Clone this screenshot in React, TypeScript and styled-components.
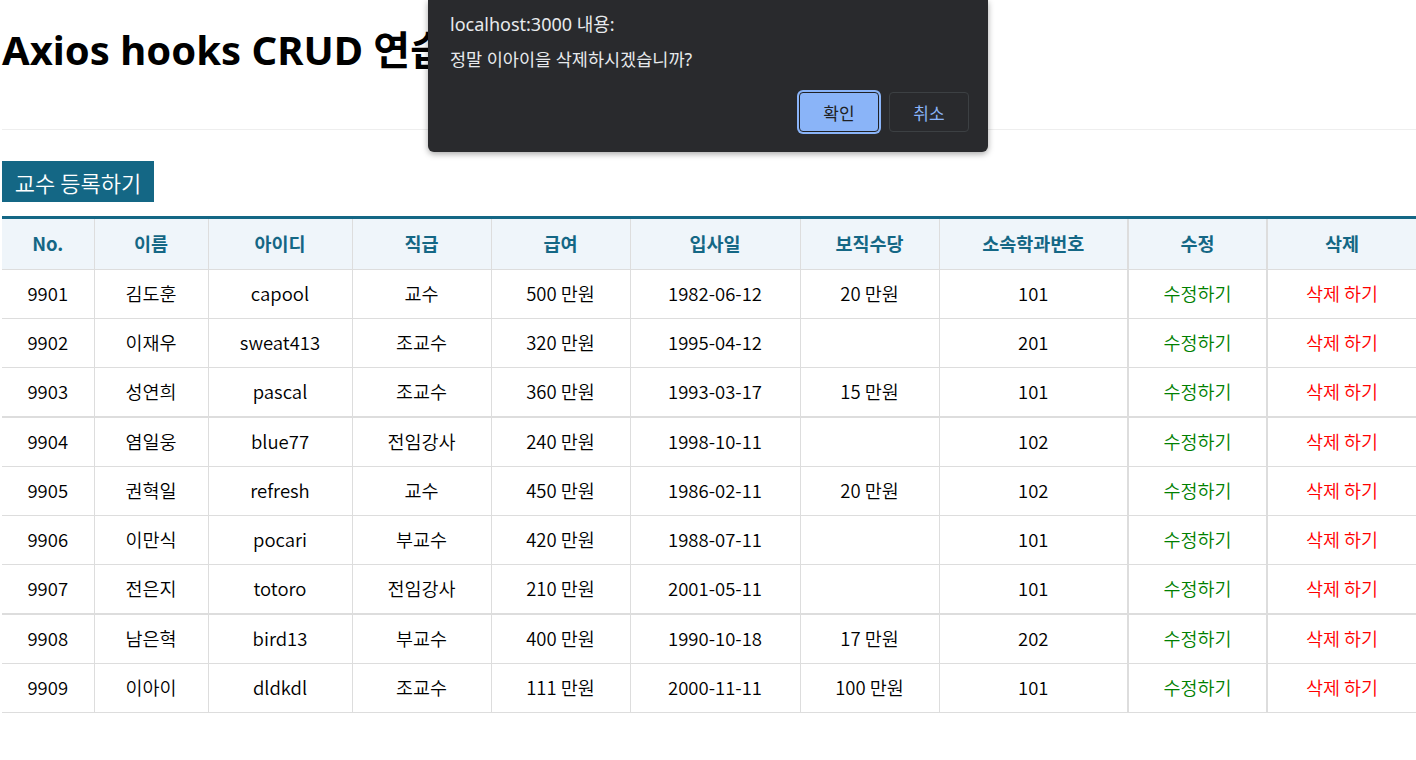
import React from "react";
import styled, { createGlobalStyle } from "styled-components";

interface Professor {
  no: number;
  name: string;
  userid: string;
  position: string;
  sal: number;
  hiredate: string;
  comm?: number;
  deptno: number;
}

const professors: Professor[] = [
  { no: 9901, name: "김도훈", userid: "capool", position: "교수", sal: 500, hiredate: "1982-06-12", comm: 20, deptno: 101 },
  { no: 9902, name: "이재우", userid: "sweat413", position: "조교수", sal: 320, hiredate: "1995-04-12", deptno: 201 },
  { no: 9903, name: "성연희", userid: "pascal", position: "조교수", sal: 360, hiredate: "1993-03-17", comm: 15, deptno: 101 },
  { no: 9904, name: "염일웅", userid: "blue77", position: "전임강사", sal: 240, hiredate: "1998-10-11", deptno: 102 },
  { no: 9905, name: "권혁일", userid: "refresh", position: "교수", sal: 450, hiredate: "1986-02-11", comm: 20, deptno: 102 },
  { no: 9906, name: "이만식", userid: "pocari", position: "부교수", sal: 420, hiredate: "1988-07-11", deptno: 101 },
  { no: 9907, name: "전은지", userid: "totoro", position: "전임강사", sal: 210, hiredate: "2001-05-11", deptno: 101 },
  { no: 9908, name: "남은혁", userid: "bird13", position: "부교수", sal: 400, hiredate: "1990-10-18", comm: 17, deptno: 202 },
  { no: 9909, name: "이아이", userid: "dldkdl", position: "조교수", sal: 111, hiredate: "2000-11-11", comm: 100, deptno: 101 },
];

const columns = [
  { label: "No.", width: 92 },
  { label: "이름", width: 114 },
  { label: "아이디", width: 144 },
  { label: "직급", width: 139 },
  { label: "급여", width: 139 },
  { label: "입사일", width: 170 },
  { label: "보직수당", width: 139 },
  { label: "소속학과번호", width: 189 },
  { label: "수정", width: 139 },
  { label: "삭제", width: 149 },
];

const App: React.FC = () => {
  return (
    <>
      <GlobalStyle />
      <Page>
        <Title>Axios hooks CRUD 연습</Title>
        <Divider />
        <AddButton>교수 등록하기</AddButton>
        <Table>
          <colgroup>
            {columns.map((c) => (
              <col key={c.label} style={{ width: c.width }} />
            ))}
          </colgroup>
          <thead>
            <tr>
              {columns.map((c) => (
                <Th key={c.label}>{c.label}</Th>
              ))}
            </tr>
          </thead>
          <tbody>
            {professors.map((p) => (
              <Row key={p.no}>
                <Td>{p.no}</Td>
                <Td>{p.name}</Td>
                <Td>{p.userid}</Td>
                <Td>{p.position}</Td>
                <Td>{p.sal} 만원</Td>
                <Td>{p.hiredate}</Td>
                <Td>{p.comm ? `${p.comm} 만원` : ""}</Td>
                <Td>{p.deptno}</Td>
                <Td>
                  <ActionLink $color="#008000">수정하기</ActionLink>
                </Td>
                <Td>
                  <ActionLink $color="#ff0000">삭제 하기</ActionLink>
                </Td>
              </Row>
            ))}
          </tbody>
        </Table>
      </Page>

      <Dialog>
        <DialogTitle>localhost:3000 내용:</DialogTitle>
        <DialogMessage>정말 이아이을 삭제하시겠습니까?</DialogMessage>
        <DialogButtons>
          <DialogButton $primary>확인</DialogButton>
          <DialogButton>취소</DialogButton>
        </DialogButtons>
      </Dialog>
    </>
  );
};

export default App;

const GlobalStyle = createGlobalStyle`
  body {
    margin: 0;
    background: #fff;
    font-family: "Noto Sans CJK KR", "Noto Sans", sans-serif;
    color: #000;
  }
`;

const Page = styled.div`
  padding: 0 0 0 2px;
`;

const Title = styled.h1`
  margin: 0;
  padding: 24px 0 0;
  height: 129px;
  box-sizing: border-box;
  font-family: "Noto Sans", "Noto Sans CJK KR", sans-serif;
  font-size: 40px;
  font-weight: 700;
  line-height: 52px;
`;

const Divider = styled.hr`
  margin: 0 0 31px;
  border: none;
  border-top: 1px solid #eeeeee;
  height: 0;
`;

const AddButton = styled.button`
  display: block;
  width: 152px;
  height: 41px;
  padding: 0;
  background: #146785;
  color: #fff;
  border: none;
  font-family: "Noto Sans CJK KR", sans-serif;
  font-size: 22px;
  font-weight: 350;
  cursor: pointer;
`;

const Table = styled.table`
  margin-top: 14px;
  width: 1414px;
  border-collapse: collapse;
  table-layout: fixed;
  border-top: 3px solid #146785;
  font-size: 18.5px;
  font-weight: 350;
`;

const Th = styled.th`
  height: 48px;
  padding: 0 0 2px;
  background: #eff5fa;
  color: #146785;
  font-weight: 700;
  font-size: 18.5px;
  border: 1px solid #dddddd;
  border-top: none;
  &:first-child {
    border-left: none;
  }
  &:last-child {
    border-right: none;
  }
  &:nth-child(9),
  &:nth-child(10) {
    border-left-width: 2px;
  }
`;

const Row = styled.tr`
  &:nth-child(3) td,
  &:nth-child(7) td {
    border-bottom-width: 2px;
  }
`;

const Td = styled.td`
  height: 46px;
  padding: 0 0 2px;
  text-align: center;
  border: 1px solid #dddddd;
  &:first-child {
    border-left: none;
  }
  &:last-child {
    border-right: none;
  }
  &:nth-child(9),
  &:nth-child(10) {
    border-left-width: 2px;
  }
`;

const ActionLink = styled.span<{ $color: string }>`
  color: ${(p) => p.$color};
  cursor: pointer;
`;

const Dialog = styled.div`
  position: absolute;
  top: 0;
  left: 428px;
  width: 560px;
  height: 152px;
  box-sizing: border-box;
  padding: 11px 19px 20px 22px;
  background: #292a2d;
  border-radius: 0 0 6px 6px;
  box-shadow: 0 2px 6px rgba(0, 0, 0, 0.35);
  font-family: "Noto Sans", "Noto Sans CJK KR", sans-serif;
  display: flex;
  flex-direction: column;
`;

const DialogTitle = styled.div`
  color: #e8eaed;
  font-size: 18px;
  line-height: 26px;
`;

const DialogMessage = styled.div`
  margin-top: 9px;
  color: #e8eaed;
  font-size: 17.5px;
  line-height: 26px;
`;

const DialogButtons = styled.div`
  margin-top: auto;
  display: flex;
  justify-content: flex-end;
  gap: 10px;
`;

const DialogButton = styled.div<{ $primary?: boolean }>`
  width: 80px;
  height: 40px;
  box-sizing: border-box;
  display: flex;
  align-items: center;
  justify-content: center;
  font-size: 17px;
  border-radius: 4px;
  color: ${(p) => (p.$primary ? "#202124" : "#8ab4f8")};
  background: ${(p) => (p.$primary ? "#8ab4f8" : "transparent")};
  border: 1px solid ${(p) => (p.$primary ? "#202124" : "#3c4043")};
  box-shadow: ${(p) => (p.$primary ? "0 0 0 2px #8ab4f8" : "none")};
`;
